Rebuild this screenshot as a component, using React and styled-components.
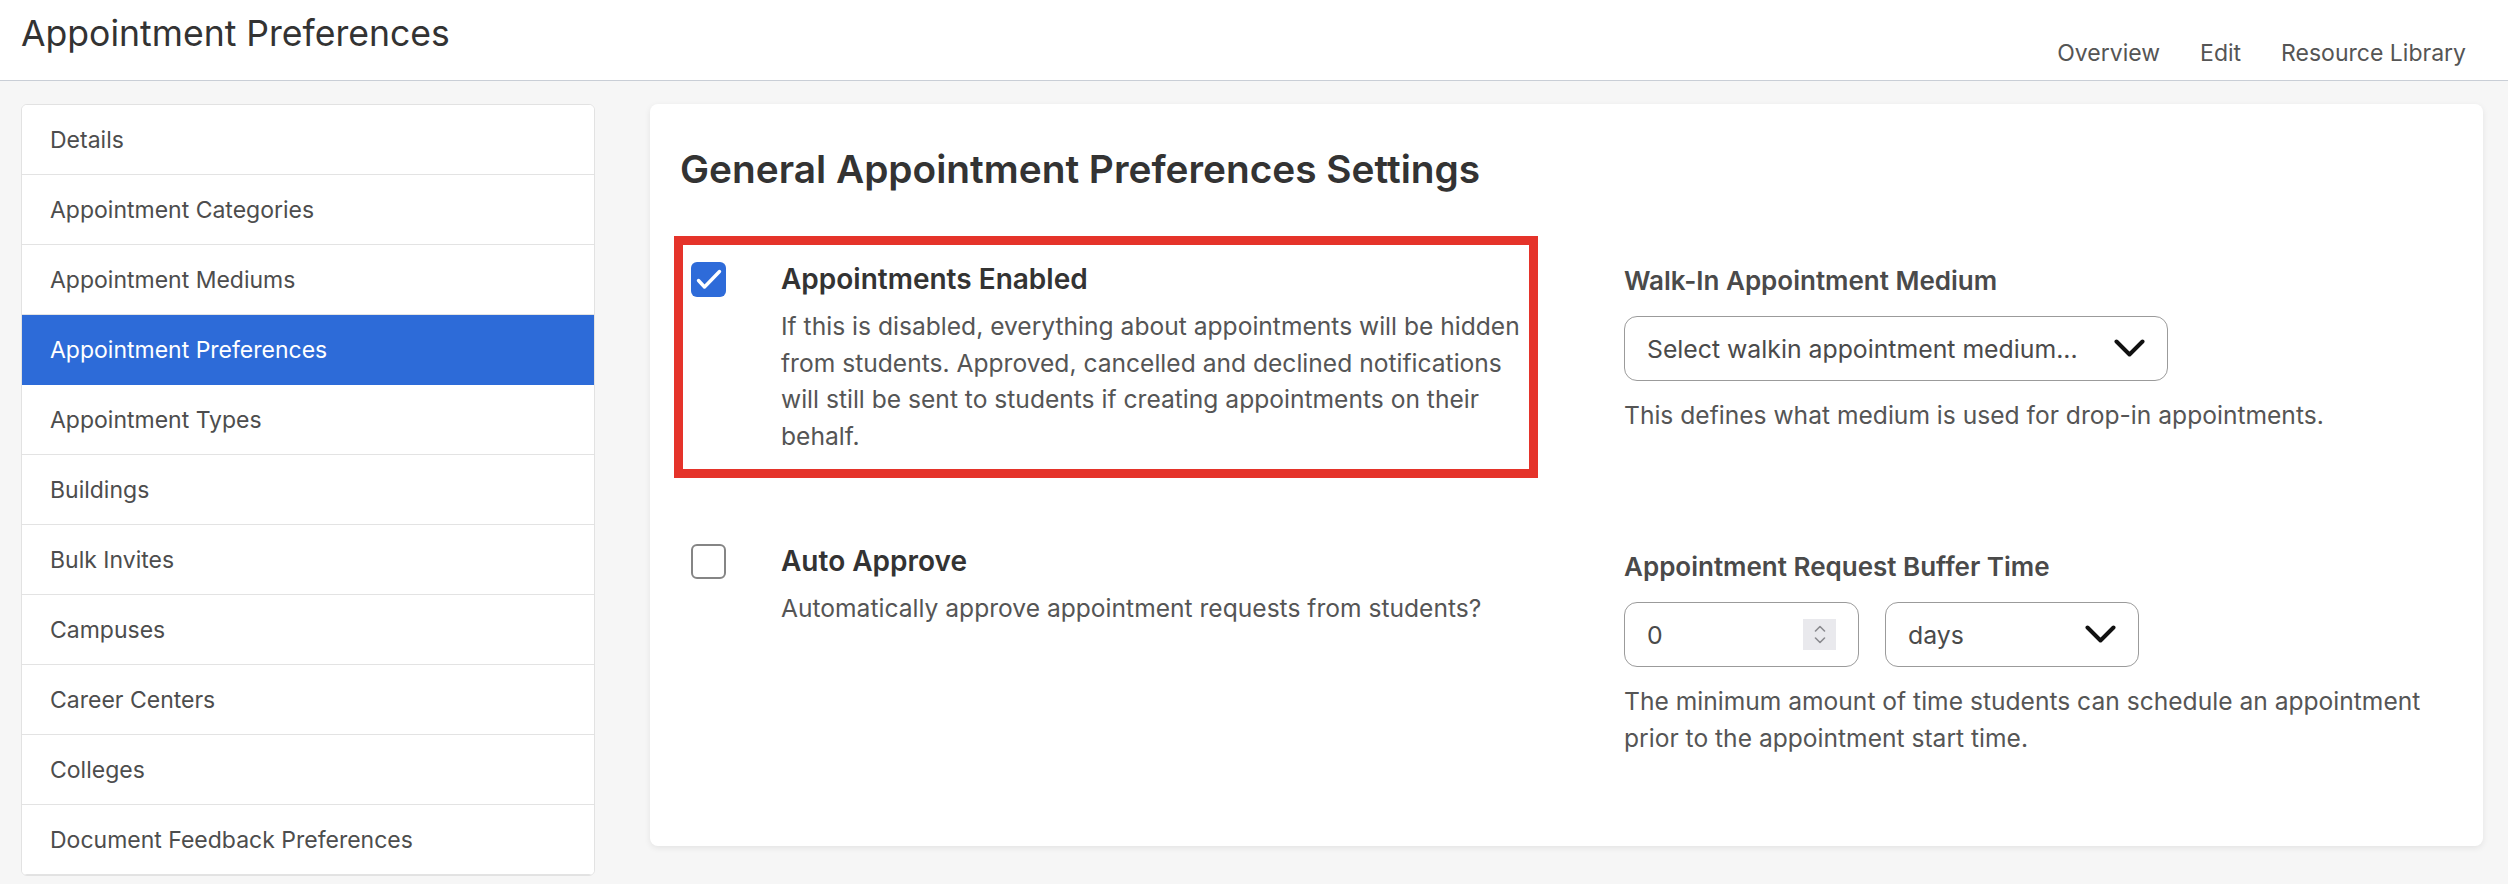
import React from "react";
import styled, { createGlobalStyle } from "styled-components";

const GlobalStyle = createGlobalStyle`
  html, body {
    margin: 0;
    padding: 0;
    overflow: hidden;
    background-color: #f6f6f6;
    font-family: Inter, "Noto Sans", "Liberation Sans", sans-serif;
  }
  * {
    box-sizing: border-box;
  }
`;

const Page = styled.div`
  min-height: 884px;
  background-color: #f6f6f6;
`;

const Header = styled.header`
  display: flex;
  justify-content: space-between;
  align-items: flex-start;
  height: 81px;
  padding: 13px 42px 0 21px;
  background-color: #fff;
  border-bottom: 1px solid #c9ced6;
`;

const PageTitle = styled.h1`
  margin: 0;
  font-size: 35.6px;
  line-height: 42px;
  font-weight: 400;
  color: #333;
`;

const Nav = styled.nav`
  display: flex;
  gap: 40px;
  margin-top: 27px;
`;

const NavLink = styled.a`
  font-size: 23px;
  line-height: 27px;
  color: #555;
  text-decoration: none;
  cursor: pointer;
`;

const Body = styled.div`
  display: grid;
  grid-template-columns: 574px 1fr;
  column-gap: 55px;
  align-items: start;
  padding: 23px 25px 0 21px;
`;

const SideMenu = styled.ul`
  list-style: none;
  margin: 0;
  padding: 0;
  background-color: #fff;
  border: 1px solid #e2e2e2;
  border-radius: 6px;
  overflow: hidden;
`;

const MenuItem = styled.li`
  display: flex;
  align-items: center;
  height: 70px;
  padding-left: 28px;
  font-size: 23px;
  color: ${({ active }) => (active ? "#fff" : "#4d4d4d")};
  background-color: ${({ active }) => (active ? "#2d6bd8" : "#fff")};
  border-bottom: 1px solid ${({ active }) => (active ? "#2d6bd8" : "#e3e3e3")};
  cursor: pointer;
`;

const Card = styled.section`
  background-color: #fff;
  border-radius: 8px;
  box-shadow: 0 2px 6px rgba(0, 0, 0, 0.08);
  padding: 42px 30px 89px 30px;
`;

const Heading = styled.h2`
  margin: 0 0 60px 0;
  font-size: 38.8px;
  line-height: 46px;
  font-weight: 600;
  color: #333;
`;

const SettingsGrid = styled.div`
  display: grid;
  grid-template-columns: 858px 1fr;
  column-gap: 86px;
  row-gap: 80px;
  align-items: start;
`;

const ToggleSetting = styled.div`
  position: relative;
  display: flex;
  align-items: flex-start;
  gap: 55px;
  padding: 10px 0 0 11px;
`;

const Highlight = styled.div`
  position: absolute;
  top: -16px;
  left: -6px;
  right: 0;
  bottom: -24px;
  border: 9px solid #e5332a;
  pointer-events: none;
`;

const CheckBox = styled.span`
  flex: none;
  display: flex;
  align-items: center;
  justify-content: center;
  width: 35px;
  height: 35px;
  border-radius: 6px;
  background-color: ${({ checked }) => (checked ? "#2e6bd9" : "#fff")};
  border: ${({ checked }) => (checked ? "none" : "2px solid #858585")};
`;

const ToggleText = styled.div`
  padding-top: 0;
`;

const ToggleTitle = styled.div`
  font-size: 28px;
  line-height: 34px;
  font-weight: 600;
  color: #333;
  margin-bottom: 12px;
`;

const Description = styled.p`
  margin: 0;
  font-size: 24.6px;
  line-height: 36.6px;
  color: #555;
`;

const FieldSetting = styled.div`
  padding-top: ${({ offset }) => offset}px;
`;

const FieldLabel = styled.div`
  font-size: 26px;
  line-height: 31px;
  font-weight: 600;
  color: #4a4a4a;
  margin-bottom: 20px;
`;

const Controls = styled.div`
  display: flex;
  gap: 26px;
  margin-bottom: 16px;
`;

const SelectBox = styled.div`
  display: flex;
  align-items: center;
  justify-content: space-between;
  width: ${({ width }) => width}px;
  height: 65px;
  padding: 0 22px;
  border: 1.5px solid #9b9b9b;
  border-radius: 13px;
  font-size: 24.8px;
  color: #4a4a4a;
  background-color: #fff;
`;

const Spinner = styled.span`
  display: flex;
  flex-direction: column;
  align-items: center;
  justify-content: center;
  gap: 5px;
  width: 33px;
  height: 31px;
  background-color: #e9e9ed;
`;

const Chevron = () => (
  <svg width="31" height="19" viewBox="0 0 31 19" fill="none">
    <path d="M2.5 2.5 L15.5 15.5 L28.5 2.5" stroke="#111" strokeWidth="4" strokeLinecap="round" strokeLinejoin="round" />
  </svg>
);

const Check = () => (
  <svg width="35" height="35" viewBox="0 0 35 35" fill="none">
    <path d="M7.5 18.5 L13.5 25 L28.5 9.5" stroke="#fff" strokeWidth="3.4" strokeLinecap="round" strokeLinejoin="round" />
  </svg>
);

const Caret = ({ up }) => (
  <svg width="12" height="7" viewBox="0 0 12 7" fill="none">
    <path d={up ? "M1.5 6 L6 1.5 L10.5 6" : "M1.5 1 L6 5.5 L10.5 1"} stroke="#8a8a8f" strokeWidth="1.6" strokeLinecap="round" strokeLinejoin="round" />
  </svg>
);

const menu = [
  "Details",
  "Appointment Categories",
  "Appointment Mediums",
  "Appointment Preferences",
  "Appointment Types",
  "Buildings",
  "Bulk Invites",
  "Campuses",
  "Career Centers",
  "Colleges",
  "Document Feedback Preferences",
];

export default function App() {
  return (
    <Page>
      <GlobalStyle />
      <Header>
        <PageTitle>Appointment Preferences</PageTitle>
        <Nav>
          <NavLink>Overview</NavLink>
          <NavLink>Edit</NavLink>
          <NavLink>Resource Library</NavLink>
        </Nav>
      </Header>
      <Body>
        <SideMenu>
          {menu.map(name => (
            <MenuItem key={name} active={name === "Appointment Preferences"}>
              {name}
            </MenuItem>
          ))}
        </SideMenu>
        <Card>
          <Heading>General Appointment Preferences Settings</Heading>
          <SettingsGrid>
            <ToggleSetting>
              <Highlight />
              <CheckBox checked>
                <Check />
              </CheckBox>
              <ToggleText>
                <ToggleTitle>Appointments Enabled</ToggleTitle>
                <Description>
                  If this is disabled, everything about appointments will be hidden
                  from students. Approved, cancelled and declined notifications
                  will still be sent to students if creating appointments on their
                  behalf.
                </Description>
              </ToggleText>
            </ToggleSetting>
            <FieldSetting offset={13}>
              <FieldLabel>Walk-In Appointment Medium</FieldLabel>
              <Controls>
                <SelectBox width={544}>
                  <span>Select walkin appointment medium...</span>
                  <Chevron />
                </SelectBox>
              </Controls>
              <Description>This defines what medium is used for drop-in appointments.</Description>
            </FieldSetting>
            <ToggleSetting>
              <CheckBox />
              <ToggleText>
                <ToggleTitle>Auto Approve</ToggleTitle>
                <Description>Automatically approve appointment requests from students?</Description>
              </ToggleText>
            </ToggleSetting>
            <FieldSetting offset={17}>
              <FieldLabel>Appointment Request Buffer Time</FieldLabel>
              <Controls>
                <SelectBox width={235}>
                  <span>0</span>
                  <Spinner>
                    <Caret up />
                    <Caret />
                  </Spinner>
                </SelectBox>
                <SelectBox width={254}>
                  <span>days</span>
                  <Chevron />
                </SelectBox>
              </Controls>
              <Description>
                The minimum amount of time students can schedule an appointment
                prior to the appointment start time.
              </Description>
            </FieldSetting>
          </SettingsGrid>
        </Card>
      </Body>
    </Page>
  );
}
